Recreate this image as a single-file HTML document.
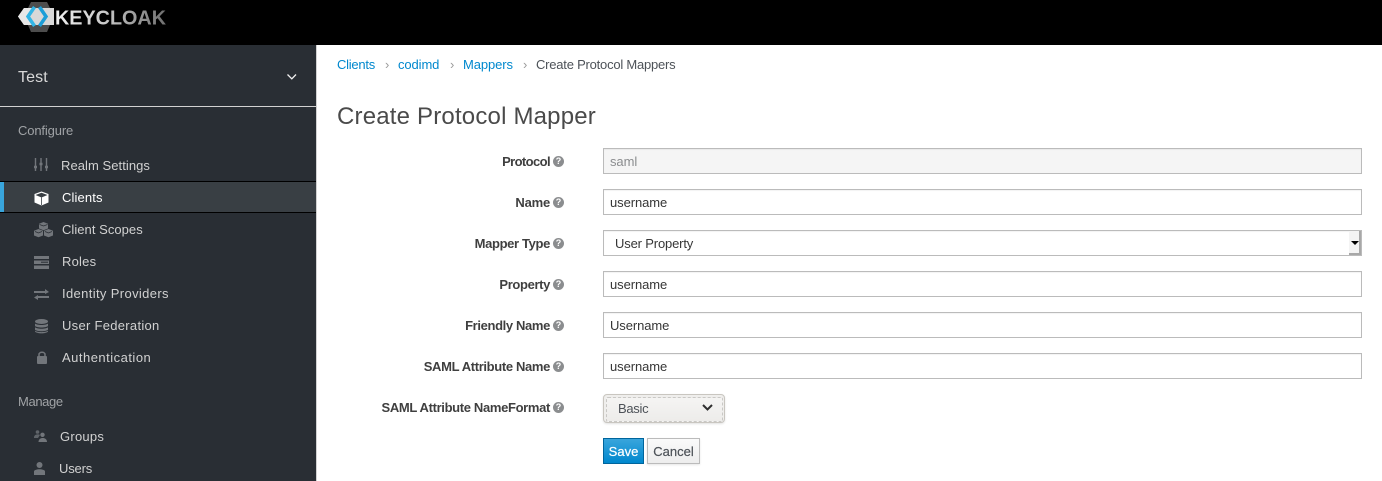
<!DOCTYPE html>
<html><head><meta charset="utf-8">
<style>
html,body{margin:0;padding:0;background:#fff;}
body{width:1382px;height:481px;overflow:hidden;position:relative;font-family:"Liberation Sans",sans-serif;font-size:13px;color:#363636;}
.a{position:absolute;white-space:nowrap;line-height:18px;}
.side{color:#d1d1d1;}
.sec{color:#a0a3a6;}
.lbl{font-weight:bold;color:#3f3f3f;text-align:right;right:832px;}
.q{position:absolute;width:11px;height:11px;border-radius:50%;background:#8b8d8f;color:#fff;font-size:9px;font-weight:bold;line-height:11px;text-align:center;}
.inp{position:absolute;left:603px;width:757px;height:24px;border:1px solid #bbb;background:#fff;line-height:26px;text-indent:6px;letter-spacing:-.08px;color:#363636;box-shadow:inset 0 1px 1px rgba(3,3,3,.05);}
.lnk{color:#0088ce;}
.sep{color:#9c9c9c;}
svg{position:absolute;overflow:visible;}
</style></head><body>
<div class="a" style="left:0;top:0;width:1382px;height:45px;background:#000"></div>
<svg style="left:0;top:0" width="180" height="45">
<polygon points="31,2 47,2 54,16 47,32 31,32 24,16" fill="#4d4d4d"/>
<polygon points="18,16.500 24,8 54,8 54,25 24,25" fill="#d8d8d8"/>
<polygon points="18,16.500 24,8 35,8 30,16.500 35,25 24,25" fill="#e8e8e8"/>
<path d="M34.500 7 L28 16.500 L34.500 26" fill="none" stroke="#33b5e5" stroke-width="3.500"/>
<path d="M39.500 7 L46 16.500 L39.500 26" fill="none" stroke="#1c9ed8" stroke-width="3.500"/>
<defs><linearGradient id="g" x1="0" x2="1"><stop offset="0" stop-color="#f0f0f0"/><stop offset=".45" stop-color="#c9c9c9"/><stop offset="1" stop-color="#6f6f6f"/></linearGradient></defs>
<text x="55" y="24.500" font-family="Liberation Sans" font-weight="bold" font-size="20.500" fill="url(#g)" textLength="111" lengthAdjust="spacingAndGlyphs">KEYCLOAK</text>
</svg>
<div class="a" style="left:0;top:45px;width:316px;height:436px;background:#292e34"></div>
<div class="a" style="left:316px;top:45px;width:1px;height:436px;background:#d1d1d1"></div>
<div class="a" style="left:18px;top:68px;color:#d8d8d8;font-size:16px;line-height:20px;letter-spacing:.1px;">Test</div>
<svg style="left:287px;top:74px" width="10" height="6"><path d="M.5 .5 L4.800 4.800 L9 .5" fill="none" stroke="#f0f0f0" stroke-width="1.300"/></svg>
<div class="a" style="left:0;top:106px;width:316px;height:1px;background:#d1d1d1"></div>
<div class="a sec" style="left:18px;top:122px;letter-spacing:-.14px;">Configure</div>
<div class="a side" style="left:61px;top:157px;letter-spacing:.06px;">Realm Settings</div>
<div class="a" style="left:0;top:181px;width:316px;height:30px;background:#393f44;border-top:1px solid #000;border-bottom:1px solid #000"></div>
<div class="a" style="left:0;top:182px;width:4px;height:30px;background:#39a5dc"></div>
<div class="a" style="left:62px;top:189px;color:#fff;letter-spacing:.12px;">Clients</div>
<div class="a side" style="left:62px;top:221px;letter-spacing:.04px;">Client Scopes</div>
<div class="a side" style="left:62px;top:253px;letter-spacing:.22px;">Roles</div>
<div class="a side" style="left:62px;top:285px;letter-spacing:.36px;">Identity Providers</div>
<div class="a side" style="left:62px;top:317px;letter-spacing:.29px;">User Federation</div>
<div class="a side" style="left:62px;top:349px;letter-spacing:.49px;">Authentication</div>
<div class="a sec" style="left:18px;top:393px;letter-spacing:-.37px;">Manage</div>
<div class="a side" style="left:60px;top:428px;letter-spacing:.25px;">Groups</div>
<div class="a side" style="left:59px;top:460px;letter-spacing:-.18px;">Users</div>
<!-- icons -->
<svg style="left:34px;top:158px" width="14" height="14" fill="none" stroke="#72767b" stroke-width="1.400">
<path d="M1.500 0V13M7 0V13M12.500 0V13"/><path d="M0 9H3M5.500 6H8.500M11 9H14" stroke-width="2.500"/></svg>
<svg style="left:34px;top:191px" width="15" height="15"><path d="M7.500 .5L14.500 3V11.500L7.500 14.500L.5 11.500V3Z" fill="#fff"/><path d="M1.500 4L7.500 6.500L13.500 4L7.500 1.800Z" fill="#393f44"/><path d="M7.500 6.500V14" stroke="#393f44" stroke-width=".8"/></svg>
<svg style="left:34px;top:222px" width="19" height="16" fill="#72767b">
<path d="M9.500 0L14 1.800V6.500L9.500 8.300L5 6.500V1.800Z"/><path d="M4.500 7L9 8.800V13.500L4.500 15.300L0 13.500V8.800Z"/><path d="M14.500 7L19 8.800V13.500L14.500 15.300L10 13.500V8.800Z"/>
<path d="M5.500 2.500L9.500 4L13.500 2.500M1 9.500L4.500 11L8 9.500M11 9.500L14.500 11L18 9.500" stroke="#292e34" stroke-width=".8" fill="none"/></svg>
<svg style="left:34px;top:256px" width="15" height="13" fill="#72767b"><rect width="15" height="3"/><rect y="4.500" width="15" height="3.500"/><rect y="9.500" width="15" height="3.500"/><rect x="7" y="5.700" width="7" height="1" fill="#292e34"/></svg>
<svg style="left:34px;top:289px" width="15" height="11" fill="#72767b"><path d="M0 2H11V0L15 3L11 5V4H0Z"/><path d="M15 7H4V6L0 8.500L4 11V9H15Z"/></svg>
<svg style="left:35px;top:319px" width="13" height="15" fill="#72767b"><ellipse cx="6.500" cy="2.500" rx="6.500" ry="2.500"/><path d="M0 4.500C2 6.500 11 6.500 13 4.500V7C11 9 2 9 0 7Z"/><path d="M0 8.300C2 10.300 11 10.300 13 8.300V10.800C11 12.800 2 12.800 0 10.800Z"/><path d="M0 11.800C2 13.500 11 13.500 13 11.800V12.500C11 15 2 15 0 12.500Z"/></svg>
<svg style="left:37px;top:351px" width="10" height="13" fill="#72767b"><rect y="5" width="10" height="8" rx="1"/><path d="M2 6V3.500C2 .5 8 .5 8 3.500V6" fill="none" stroke="#72767b" stroke-width="1.500"/></svg>
<svg style="left:34px;top:430px" width="13" height="12" fill="#72767b"><circle cx="3.500" cy="2" r="1.800" fill="#5f6469"/><path d="M0 7.500C0 4 5 4 6 5L4 8H0Z" fill="#5f6469"/><circle cx="8.500" cy="4.800" r="2.200"/><path d="M4.500 12C4.500 6.700 13 6.700 13 12Z"/></svg>
<svg style="left:34px;top:462px" width="11" height="13" fill="#72767b"><circle cx="5.500" cy="3" r="3"/><path d="M0 13V9.500C0 6.500 11 6.500 11 9.500V13Z"/></svg>

<!-- breadcrumb -->
<div class="a lnk" style="left:337px;top:56px;letter-spacing:-.25px;">Clients</div>
<div class="a sep" style="left:385px;top:56px;">›</div>
<div class="a lnk" style="left:398px;top:56px;letter-spacing:-.1px;">codimd</div>
<div class="a sep" style="left:450px;top:56px;">›</div>
<div class="a lnk" style="left:463px;top:56px;letter-spacing:-.1px;">Mappers</div>
<div class="a sep" style="left:523px;top:56px;">›</div>
<div class="a" style="left:536px;top:56px;letter-spacing:-.22px;color:#4d5258;">Create Protocol Mappers</div>
<div class="a" style="left:337px;top:102px;font-size:24px;line-height:30px;color:#4a4a4a;letter-spacing:.19px;font-weight:normal;">Create Protocol Mapper</div>

<!-- labels -->
<div class="a lbl" style="top:153px;letter-spacing:-.6px;">Protocol</div>
<div class="a lbl" style="top:194px;letter-spacing:-.2px;">Name</div>
<div class="a lbl" style="top:235px;letter-spacing:-.35px;">Mapper Type</div>
<div class="a lbl" style="top:276px;letter-spacing:-.36px;">Property</div>
<div class="a lbl" style="top:317px;letter-spacing:-.36px;">Friendly Name</div>
<div class="a lbl" style="top:358px;letter-spacing:-.35px;">SAML Attribute Name</div>
<div class="a lbl" style="top:399px;letter-spacing:-.34px;">SAML Attribute NameFormat</div>
<div class="q" style="left:553px;top:156px;">?</div>
<div class="q" style="left:553px;top:197px;">?</div>
<div class="q" style="left:553px;top:238px;">?</div>
<div class="q" style="left:553px;top:279px;">?</div>
<div class="q" style="left:553px;top:320px;">?</div>
<div class="q" style="left:553px;top:361px;">?</div>
<div class="q" style="left:553px;top:402px;">?</div>

<div class="inp" style="top:148px;background:#f5f5f5;color:#8b8d8f;">saml</div>
<div class="inp" style="top:189px;">username</div>
<div class="inp" style="top:230px;text-indent:11px;letter-spacing:-.16px;">User Property</div>
<div class="a" style="left:1349px;top:231px;width:10px;height:22px;background:#f4f4f4;border-right:2px solid #a8a8a8;border-bottom:2px solid #a8a8a8;"></div>
<div class="a" style="left:1351px;top:241px;width:0;height:0;border-left:4px solid transparent;border-right:4px solid transparent;border-top:4px solid #000"></div>
<div class="inp" style="top:271px;">username</div>
<div class="inp" style="top:312px;">Username</div>
<div class="inp" style="top:353px;">username</div>

<div class="a" style="left:603px;top:394px;width:120px;height:27px;border:1px solid #c9c6c0;border-radius:4px;background:#efeeec;box-shadow:0 1px 2px rgba(0,0,0,.12)"></div>
<div class="a" style="left:606px;top:397px;width:115px;height:23px;border:1px dashed #c9c8c5;border-radius:2px;background:linear-gradient(#f5f4f3,#edecea)"></div>
<div class="a" style="left:618px;top:400px;letter-spacing:-.3px;color:#4d5258;">Basic</div>
<svg style="left:702px;top:404px" width="11" height="7"><path d="M1 1L5.500 5.500L10 1" fill="none" stroke="#2f2f2f" stroke-width="2"/></svg>

<div class="a" style="left:603px;top:438px;width:39px;height:24px;background:linear-gradient(#39a5dc,#0088ce);border:1px solid #00659c;color:#fff;font-size:13px;-webkit-text-stroke:.2px #fff;line-height:26px;text-align:center;">Save</div>
<div class="a" style="left:647px;top:438px;width:51px;height:24px;background:linear-gradient(#fafafa,#ededed);border:1px solid #bbb;color:#4d5258;font-size:13px;-webkit-text-stroke:.2px #4d5258;line-height:26px;text-align:center;box-shadow:0 1px 2px rgba(0,0,0,.1);">Cancel</div>
</body></html>
